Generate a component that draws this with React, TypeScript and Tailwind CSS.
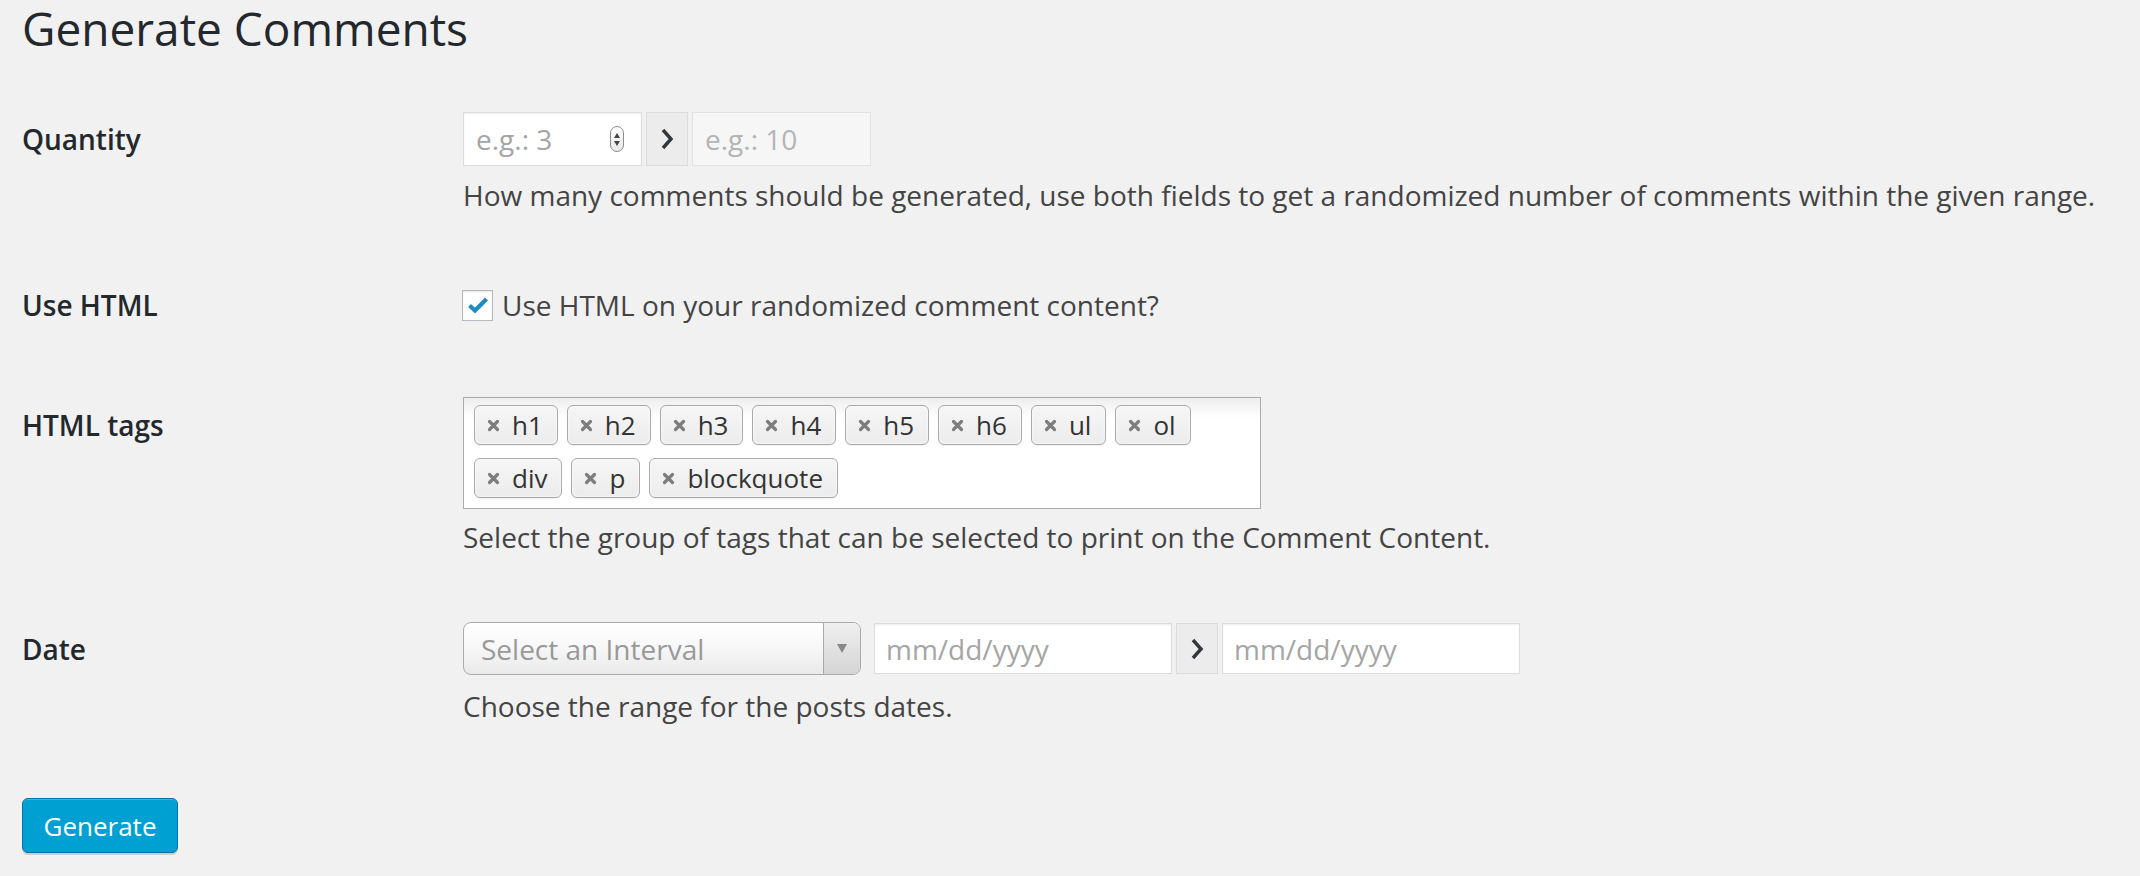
import React from "react";

const font = { fontFamily: '"Open Sans", "Noto Sans", "Liberation Sans", sans-serif' };

function Chevron() {
  return (
    <svg width="18" height="26" viewBox="0 0 18 26" fill="none">
      <path d="M5 4 L13 13 L5 22" stroke="#32373c" strokeWidth="3.4" strokeLinejoin="miter" />
    </svg>
  );
}

function ArrowBox({ h }: { h: string }) {
  return (
    <div className={`flex items-center justify-center w-[42px] ${h} border border-[#dcdcdc] bg-[#ececec] shrink-0`}>
      <Chevron />
    </div>
  );
}

function Tag({ label }: { label: string }) {
  return (
    <div className="flex items-center h-[40px] pl-[12px] pr-[14px] border border-[#aaaaaa] rounded-[6px] bg-gradient-to-b from-[#f6f6f6] to-[#ececec] shadow-[inset_0_0_3px_#ffffff,0_1px_0_rgba(0,0,0,0.05)]">
      <svg width="13" height="13" viewBox="0 0 13 13" className="mr-[12px] shrink-0">
        <path d="M2.5 2.5 L10.5 10.5 M10.5 2.5 L2.5 10.5" stroke="#7d7d7d" strokeWidth="3.2" strokeLinecap="round" />
      </svg>
      <span className="text-[26px] leading-[36px] text-[#333333]">{label}</span>
    </div>
  );
}

export default function App() {
  const tags = ["h1", "h2", "h3", "h4", "h5", "h6", "ul", "ol", "div", "p", "blockquote"];
  return (
    <div style={font} className="w-full min-h-[876px] bg-[#f1f1f1] pl-[22px] pr-[20px]">
      <h1 className="text-[46px] leading-[56px] font-normal text-[#23282d] m-0">Generate Comments</h1>

      {/* Quantity */}
      <div className="grid grid-cols-[441px_1fr] mt-[56px]">
        <div className="pt-[9px] text-[28px] leading-[36px] font-semibold text-[#23282d]">Quantity</div>
        <div>
          <div className="flex items-center gap-[4px]">
            <div className="relative flex items-center w-[179px] h-[54px] border border-[#dddddd] bg-white shadow-[inset_0_1px_2px_rgba(0,0,0,0.07)] pl-[12px]">
              <span className="text-[28px] text-[#a5a5a5]">e.g.: 3</span>
              <div className="absolute right-[17px] top-[13px] w-[14px] h-[26px] rounded-full border border-[#8c8c8c] bg-gradient-to-b from-[#ffffff] to-[#e8e8e8] flex flex-col items-center justify-center gap-[3px]">
                <svg width="6" height="5" viewBox="0 0 6 5"><path d="M3 0 L6 5 L0 5 Z" fill="#444" /></svg>
                <svg width="6" height="5" viewBox="0 0 6 5"><path d="M0 0 L6 0 L3 5 Z" fill="#444" /></svg>
              </div>
            </div>
            <ArrowBox h="h-[54px]" />
            <div className="flex items-center w-[179px] h-[54px] border border-[#e2e2e2] bg-[#f6f6f6] pl-[12px]">
              <span className="text-[28px] text-[#b4b4b4]">e.g.: 10</span>
            </div>
          </div>
          <p className="mt-[10px] text-[28px] leading-[39px] text-[#444444]">
            How many comments should be generated, use both fields to get a randomized number of comments within the given range.
          </p>
        </div>
      </div>

      {/* Use HTML */}
      <div className="grid grid-cols-[441px_1fr] mt-[72px]">
        <div className="text-[28px] leading-[36px] font-semibold text-[#23282d]">Use HTML</div>
        <div className="flex items-center">
          <div className="w-[31px] h-[31px] border border-[#b4b9be] bg-white shadow-[inset_0_1px_2px_rgba(0,0,0,0.1)] flex items-center justify-center mr-[9px] -ml-[1px]">
            <svg width="22" height="18" viewBox="0 0 22 18">
              <path d="M2.5 9.5 L8 14.5 L19.5 3" stroke="#1e8cbe" strokeWidth="4.2" fill="none" strokeLinejoin="miter" />
            </svg>
          </div>
          <span className="text-[28px] leading-[36px] text-[#444444]">Use HTML on your randomized comment content?</span>
        </div>
      </div>

      {/* HTML tags */}
      <div className="grid grid-cols-[441px_1fr] mt-[74px]">
        <div className="pt-[10px] text-[28px] leading-[36px] font-semibold text-[#23282d]">HTML tags</div>
        <div>
          <div className="w-[798px] h-[112px] border border-[#aaaaaa] bg-white bg-gradient-to-b from-[#eeeeee] to-[#ffffff] bg-[length:100%_20px] bg-no-repeat pl-[10px] pt-[7px] pr-[10px] flex flex-wrap content-start gap-x-[9px] gap-y-[13px]">
            {tags.map((t) => (
              <Tag key={t} label={t} />
            ))}
          </div>
          <p className="mt-[9px] text-[28px] leading-[39px] text-[#444444]">
            Select the group of tags that can be selected to print on the Comment Content.
          </p>
        </div>
      </div>

      {/* Date */}
      <div className="grid grid-cols-[441px_1fr] mt-[65px]">
        <div className="pt-[9px] text-[28px] leading-[36px] font-semibold text-[#23282d]">Date</div>
        <div>
          <div className="flex items-center">
            <div className="flex w-[398px] h-[53px] border border-[#aaaaaa] rounded-[8px] bg-gradient-to-b from-[#ffffff] via-[#f7f7f7] to-[#e9e9e9] overflow-hidden">
              <div className="flex-1 flex items-center pl-[17px] text-[28px] text-[#999999]">Select an Interval</div>
              <div className="w-[37px] border-l border-[#aaaaaa] bg-gradient-to-b from-[#f0f0f0] to-[#d4d4d4] flex items-center justify-center">
                <svg width="10" height="9" viewBox="0 0 10 9"><path d="M0 0 L10 0 L5 9 Z" fill="#888888" /></svg>
              </div>
            </div>
            <div className="flex items-center ml-[13px] w-[298px] h-[51px] border border-[#dddddd] bg-white shadow-[inset_0_1px_2px_rgba(0,0,0,0.07)] pl-[11px]">
              <span className="text-[28px] text-[#a5a5a5]">mm/dd/yyyy</span>
            </div>
            <div className="ml-[4px]">
              <ArrowBox h="h-[51px]" />
            </div>
            <div className="flex items-center ml-[4px] w-[298px] h-[51px] border border-[#dddddd] bg-white shadow-[inset_0_1px_2px_rgba(0,0,0,0.07)] pl-[11px]">
              <span className="text-[28px] text-[#a5a5a5]">mm/dd/yyyy</span>
            </div>
          </div>
          <p className="mt-[12px] text-[28px] leading-[39px] text-[#444444]">Choose the range for the posts dates.</p>
        </div>
      </div>

      {/* Button */}
      <div className="mt-[72px]">
        <button className="w-[156px] h-[55px] rounded-[6px] bg-[#00a0d2] border border-[#0073aa] shadow-[inset_0_1px_0_rgba(120,200,230,0.5),0_2px_0_rgba(0,0,0,0.15)] text-white text-[26px] leading-[36px]">
          Generate
        </button>
      </div>
    </div>
  );
}
